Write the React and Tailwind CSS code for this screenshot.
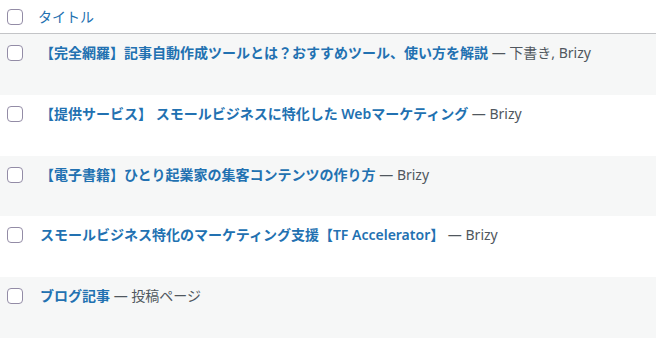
import React from "react";

const rows = [
  { title: "【完全網羅】記事自動作成ツールとは？おすすめツール、使い方を解説", state: "下書き, Brizy", alt: true, h: "h-[61px]" },
  { title: "【提供サービス】 スモールビジネスに特化した Webマーケティング", state: "Brizy", alt: false, h: "h-[61px]" },
  { title: "【電子書籍】ひとり起業家の集客コンテンツの作り方", state: "Brizy", alt: true, h: "h-[60px]" },
  { title: "スモールビジネス特化のマーケティング支援【TF Accelerator】", state: "Brizy", alt: false, h: "h-[61px]" },
  { title: "ブログ記事", state: "投稿ページ", alt: true, h: "h-[61px]" },
];

function Box() {
  return <div className="w-4 h-4 rounded-[4px] border border-[#938ca6] bg-white shrink-0" />;
}

export default function App() {
  return (
    <div
      className="w-[656px] h-[340px] overflow-hidden bg-white"
      style={{ fontFamily: '"Noto Sans", "Noto Sans CJK JP", sans-serif' }}
    >
      <div className="h-[34px] border-b border-[#c3c4c7] flex items-center">
        <div className="w-[38px] pl-[7px] shrink-0">
          <Box />
        </div>
        <span className="text-[14px] text-[#2271b1] leading-[20px]">タイトル</span>
      </div>
      {rows.map((r, i) => (
        <div
          key={i}
          className={`${r.h} flex items-start ${r.alt ? "bg-[#f6f7f7]" : "bg-white"}`}
        >
          <div className="w-[40px] pl-[7px] pt-[11px] shrink-0">
            <Box />
          </div>
          <div className="pt-[8px] leading-[20px] whitespace-nowrap">
            <span className="text-[14px] text-[#2271b1] font-semibold">{r.title}</span>
            <span className="text-[14px] text-[#50575e] font-normal"> — {r.state}</span>
          </div>
        </div>
      ))}
    </div>
  );
}
